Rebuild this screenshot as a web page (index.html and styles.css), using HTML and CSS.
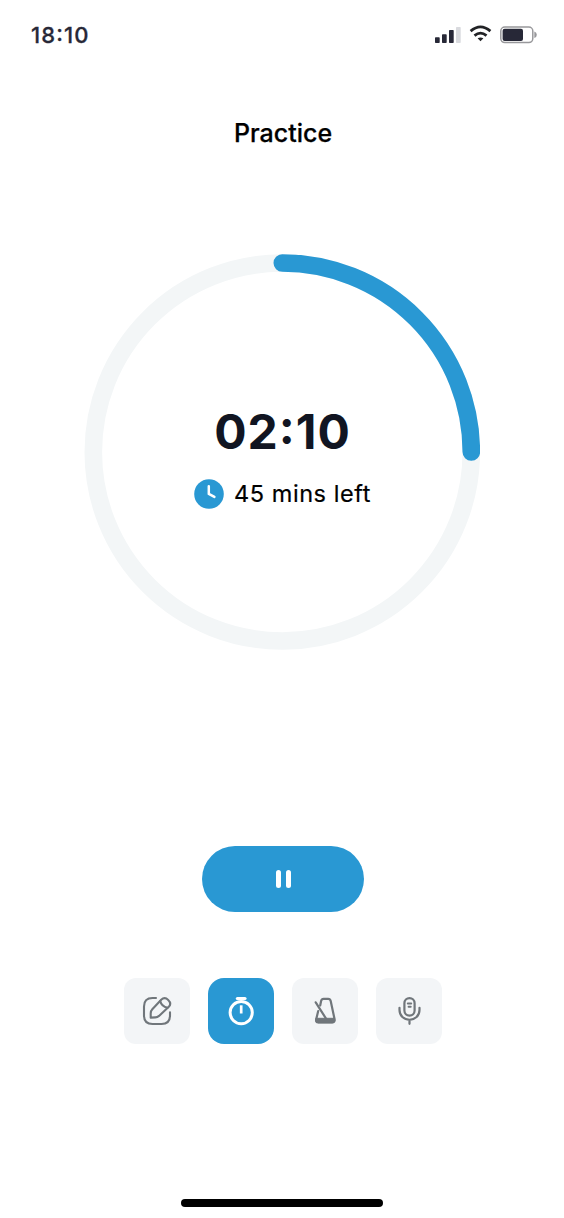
FILE: index.html
```html
<!DOCTYPE html>
<html lang="en">
<head>
<meta charset="utf-8">
<title>Practice</title>
<link rel="stylesheet" href="styles.css">
</head>
<body>
<div class="screen">
  <header class="status">
    <span class="clock">18:10</span>
    <svg class="indicators" width="104" height="20" viewBox="434 25 104 20" fill="none">
      <g fill="#272837">
        <rect x="435" y="37.3" width="4.7" height="5.7" rx=".7"/>
        <rect x="442" y="34.3" width="4.7" height="8.7" rx=".7"/>
        <rect x="449" y="30" width="4.7" height="13" rx=".7"/>
      </g>
      <rect x="456" y="27" width="4.7" height="16" rx=".7" fill="#d9dade"/>
      <g stroke="#222326" stroke-width="2.8">
        <path d="M470.6 31.1Q480.5 22.7 490.4 31.1"/>
        <path d="M474.5 35.6Q480.5 30.6 486.5 35.6"/>
      </g>
      <path d="M477.6 38.3Q480.5 36.5 483.4 38.3L480.5 41.2Z" fill="#222326"/>
      <rect x="500.8" y="27" width="32" height="15.6" rx="4" stroke="#98989b" stroke-width="1.5"/>
      <rect x="502.6" y="28.8" width="20.4" height="12.2" rx="2" fill="#272837"/>
      <path d="M534.3 31.5Q536.8 32.3 536.8 34.8T534.3 38.1Z" fill="#98989b"/>
    </svg>
  </header>
  <h1 class="title">Practice</h1>
  <main class="timer">
    <svg class="ring" width="396" height="396" viewBox="0 0 396 396" fill="none" stroke-width="17.6">
      <circle cx="198.3" cy="198" r="189" stroke="#f3f6f7"/>
      <path d="M198.3 9A189 189 0 0 1 387.3 198" stroke="#2998d3" stroke-linecap="round"/>
    </svg>
    <div class="readout">
      <div class="time">02:10</div>
      <div class="left">
        <svg width="30" height="30" viewBox="0 0 30 30" fill="none">
          <circle cx="15" cy="15" r="14.8" fill="#2998d3"/>
          <path d="M14.8 7.2V14.9L20.4 17.9" stroke="#fff" stroke-width="2.5" stroke-linecap="round" stroke-linejoin="round"/>
        </svg>
        <span class="left-label">45 mins left</span>
      </div>
    </div>
  </main>
  <button class="pause" aria-label="Pause"><span class="bar"></span><span class="bar"></span></button>
  <nav class="tools">
    <button class="tool" aria-label="Notes">
      <svg width="66" height="66" viewBox="0 0 66 66" fill="none" stroke="#70767b" stroke-width="2.1" stroke-linecap="round" stroke-linejoin="round">
        <path d="M32 20H28.5Q20 20 20 28.5V37.5Q20 46 28.5 46H37.5Q46 46 46 37.5V34.3"/>
        <path d="M37.2 21.8Q40.6 18.6 44.2 21.9Q47.9 25.4 44.8 28.8L35 37.9Q33.4 39.3 31.3 39.4L26.7 39.6V35.4Q26.7 33 28.3 31.3Z"/>
        <path d="M36.2 23Q37.4 28.3 43.6 29.8"/>
      </svg>
    </button>
    <button class="tool active" aria-label="Timer">
      <svg width="66" height="66" viewBox="0 0 66 66" fill="none" stroke="#fff" stroke-width="3">
        <circle cx="33.2" cy="34.6" r="11.1"/>
        <path d="M33.2 27.3V35.5" stroke-width="2.7"/>
        <path d="M29.4 20.5H37" stroke-width="3.2" stroke-linecap="round"/>
      </svg>
    </button>
    <button class="tool" aria-label="Metronome">
      <svg width="66" height="66" viewBox="0 0 66 66" fill="none" stroke="#70767b" stroke-width="2.2" stroke-linecap="round" stroke-linejoin="round">
        <path d="M28.2 27.5L29.1 23Q29.6 20.9 31.6 20.9H36.2Q38.2 20.9 38.7 23L42.6 41.3Q43 44.4 40.2 44.4H26.2Q23.6 44.4 24.2 41.3L26.2 33"/>
        <path d="M23.7 24.3L34.3 41"/>
        <path d="M24.2 40.3H42.4L42.8 43Q42.4 44.8 40.2 44.8H26.2Q24 44.6 23.7 43Z" fill="#70767b" stroke-width="1"/>
      </svg>
    </button>
    <button class="tool" aria-label="Record">
      <svg width="66" height="66" viewBox="0 0 66 66" fill="none" stroke="#70767b" stroke-width="2.2" stroke-linecap="round">
        <rect x="28.4" y="20.1" width="10.2" height="17.6" rx="5.1"/>
        <path d="M23.5 29.8V32C23.5 37.8 28 41.8 33.5 41.8S43.5 37.8 43.5 32V29.8M33.5 41.8V45.8"/>
        <path d="M31.8 25.6H35.2M32.6 28.8H34.7" stroke-width="2"/>
      </svg>
    </button>
  </nav>
  <div class="home"></div>
</div>
</body>
</html>
```
FILE: styles.css
```css
* { box-sizing: border-box; }
body { margin: 0; background: #fff; font-family: Inter, "Liberation Sans", sans-serif; color: #000; }
button { border: 0; padding: 0; }
.screen { width: 564px; height: 1218px; display: flex; flex-direction: column; align-items: center; overflow: hidden; }
.status { width: 100%; height: 70px; padding: 0 26px 0 31px; display: flex; justify-content: space-between; align-items: center; }
.clock { font-size: 22px; font-weight: 500; line-height: 28px; letter-spacing: 1.1px; color: #272837; font-feature-settings: "case"; -webkit-text-stroke: .3px #272837; }
.indicators { display: block; }
.title { margin: 47px 0 0; padding-left: 2px; font-size: 25px; line-height: 32px; font-weight: 500; -webkit-text-stroke: .25px #000; }
.timer { display: grid; width: 396px; height: 396px; margin-top: 105px; }
.ring, .readout { grid-area: 1 / 1; }
.readout { display: flex; flex-direction: column; align-items: center; padding: 149px 0 0 1px; }
.time { font-size: 48px; line-height: 58px; font-weight: 700; letter-spacing: 1px; color: #111522; font-feature-settings: "case"; }
.left { display: flex; align-items: center; gap: 10px; margin-top: 18px; }
.left-label { font-size: 23.5px; line-height: 30px; letter-spacing: .55px; -webkit-text-stroke: .2px #000; }
.pause { width: 162px; height: 66px; margin: 196px 0 0 2px; border-radius: 33px; background: #2998d3; display: flex; justify-content: center; align-items: center; gap: 5px; }
.bar { width: 5px; height: 18px; border-radius: 2.5px; background: #fff; }
.tools { display: flex; gap: 18px; margin: 66px 0 0 2px; }
.tool { width: 66px; height: 66px; border-radius: 12px; background: #f3f5f7; }
.tool svg { display: block; }
.tool.active { border-radius: 16px; background: #2998d3; }
.home { width: 202px; height: 8px; margin-top: 155px; border-radius: 4px; background: #000; }
```
